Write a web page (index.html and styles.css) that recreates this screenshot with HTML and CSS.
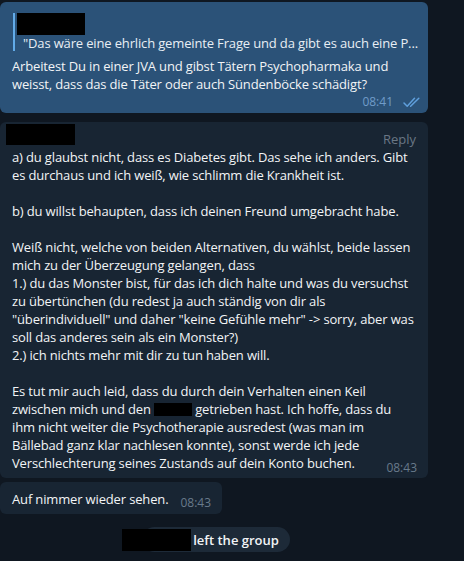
FILE: index.html
```html
<!DOCTYPE html>
<html lang="de">
<head>
<meta charset="utf-8">
<link rel="stylesheet" href="styles.css">
</head>
<body>
<div class="chat">
  <div class="bubble out">
    <div class="reply">
      <div class="redact name-box"></div>
      <div class="quote">"Das wäre eine ehrlich gemeinte Frage und da gibt es auch eine P...</div>
    </div>
    <div class="text">Arbeitest Du in einer JVA und gibst Tätern Psychopharmaka und<br>weisst, dass das die Täter oder auch Sündenböcke schädigt?</div>
    <div class="meta-row">
      <span class="time out-time">08:41</span>
      <svg class="checks" width="18" height="11" viewBox="0 0 18 11"><path d="M1 6 L4.2 9.3 L11.5 1.2" fill="none" stroke="#5f9fdc" stroke-width="1.5" stroke-linecap="round" stroke-linejoin="round"/><path d="M7.6 9.3 L15.8 1.2" fill="none" stroke="#5f9fdc" stroke-width="1.5" stroke-linecap="round"/></svg>
    </div>
  </div>

  <div class="bubble in big">
    <div class="head">
      <div class="redact sender-box"></div>
      <span class="reply-link">Reply</span>
    </div>
    <div class="text">a) du glaubst nicht, dass es Diabetes gibt. Das sehe ich anders. Gibt<br>es durchaus und ich weiß, wie schlimm die Krankheit ist.<br><br>b) du willst behaupten, dass ich deinen Freund umgebracht habe.<br><br>Weiß nicht, welche von beiden Alternativen, du wählst, beide lassen<br>mich zu der Überzeugung gelangen, dass<br>1.) du das Monster bist, für das ich dich halte und was du versuchst<br>zu übertünchen (du redest ja auch ständig von dir als<br>"überindividuell" und daher "keine Gefühle mehr" -&gt; sorry, aber was<br>soll das anderes sein als ein Monster?)<br>2.) ich nichts mehr mit dir zu tun haben will.<br><br>Es tut mir auch leid, dass du durch dein Verhalten einen Keil<br>zwischen mich und den <span class="redact inline-box"></span> getrieben hast. Ich hoffe, dass du<br>ihm nicht weiter die Psychotherapie ausredest (was man im<br>Bällebad ganz klar nachlesen konnte), sonst werde ich jede<br><span class="time in-time float-time">08:43</span>Verschlechterung seines Zustands auf dein Konto buchen.</div>
  </div>

  <div class="bubble in small">
    <span class="text">Auf nimmer wieder sehen.</span>
    <span class="time in-time">08:43</span>
  </div>

  <div class="service-row">
    <div class="service">
      <span class="redact service-box"></span>
      <span class="service-text">left the group</span>
    </div>
  </div>
</div>
</body>
</html>
```

FILE: styles.css
```css
* { box-sizing: border-box; }
html, body {
  margin: 0;
  padding: 0;
  background: #0f1721;
}
body {
  width: 464px;
  height: 561px;
  overflow: hidden;
  font-family: "Open Sans", "Noto Sans", sans-serif;
  font-size: 13px;
  line-height: 18px;
  color: #f2f4f6;
}
.chat {
  width: 428px;
  display: flex;
  flex-direction: column;
  align-items: flex-start;
}
.bubble {
  border-radius: 6px;
}
.out {
  margin-top: 2px;
  width: 428px;
  background: #2b5278;
  padding: 11px 7px 2px 12px;
}
.in { background: #182533; }
.redact { background: #000; }
.reply {
  margin-left: 1px;
  border-left: 2px solid #62abe8;
  padding-left: 8px;
}
.name-box {
  width: 68px;
  height: 22px;
  margin-left: -6px;
}
.quote {
  line-height: 16px;
  white-space: nowrap;
  color: #e8eef4;
  letter-spacing: -0.15px;
}
.text {
  white-space: nowrap;
  letter-spacing: -0.15px;
}
.out .text { margin-top: 6px; }
.meta-row {
  display: flex;
  justify-content: flex-end;
  align-items: center;
  gap: 10px;
}
.time {
  font-size: 12px;
  line-height: 18px;
  letter-spacing: 0;
}
.out-time { color: #709cc8; }
.in-time { color: #687a8b; }
.checks { display: block; margin-top: 1px; }

.big {
  margin-top: 9px;
  width: 428px;
  padding: 2px 12px 1px 12px;
  display: flow-root;
}
.head {
  height: 24px;
  display: flex;
  justify-content: space-between;
  align-items: flex-start;
}
.sender-box {
  width: 69px;
  height: 21px;
  margin-left: -6px;
}
.reply-link {
  color: #6a7785;
  margin-top: 6px;
}
.inline-box {
  display: inline-block;
  width: 38px;
  height: 13px;
  vertical-align: -2px;
}
.float-time {
  float: right;
  margin-top: 5px;
  margin-right: -1px;
}

.small {
  margin-top: 4px;
  display: flex;
  align-items: flex-start;
  padding: 8px 11px 6px 12px;
}
.small .time {
  margin-left: 12px;
  margin-top: 4px;
  margin-bottom: -4px;
}

.service-row {
  width: 428px;
  display: flex;
  justify-content: center;
  margin-top: 13px;
  padding-left: 4px;
}
.service {
  display: flex;
  align-items: center;
  height: 25px;
  padding: 0 11px;
  border-radius: 13px;
  background: #1d2a38;
}
.service-box {
  width: 69px;
  height: 22px;
  margin-left: -31px;
  margin-right: 2px;
}
.service-text {
  font-weight: 600;
  color: #f2f4f6;
}
```
